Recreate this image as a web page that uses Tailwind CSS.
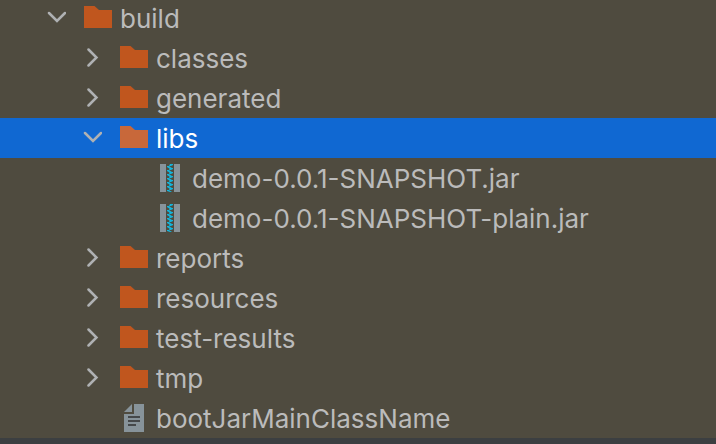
<!DOCTYPE html>
<html lang="en">
<head>
  <meta charset="UTF-8" />
  <meta name="viewport" content="width=device-width, initial-scale=1.0"/>
  <title>Project</title>
  <script src="https://cdn.jsdelivr.net/npm/@tailwindcss/browser@4"></script>
</head>
<body class="min-h-screen flex flex-col overflow-hidden bg-[#3c3f41] font-['Inter',sans-serif] text-[26px] leading-10 text-[#bbbbbb]">

  <svg class="hidden">
    <symbol id="down" viewBox="0 0 20 20">
      <path d="M3 5l8 8 8-8" fill="none" stroke="#afb1b3" stroke-width="2.5" stroke-linecap="round"/>
    </symbol>
    <symbol id="right" viewBox="0 0 20 20">
      <path d="M6.500 1.500l8 8-8 8" fill="none" stroke="#afb1b3" stroke-width="2.500" stroke-linecap="round"/>
    </symbol>
    <symbol id="folder" viewBox="0 0 32 32">
      <path d="M2 4h10.500l4.500 4h13v18H2z" fill="currentColor"/>
    </symbol>
    <symbol id="jar" viewBox="0 0 32 32">
      <path d="M6 2h6v28H6zM20 2h6v28h-6z" fill="#87939a"/>
      <path d="M16 2h3v1l-2 1h-2zM16 6h3v1l-2 1h-2zM16 10h3v1l-2 1h-2zM16 14h3v1l-2 1h-2zM16 18h3v1l-2 1h-2zM16 22h3v1l-2 1h-2zM16 26h3v1l-2 1h-2z" fill="#12b5dc"/>
      <path d="M13 4h2l3 2v1h-2l-3-2zM13 8h2l3 2v1h-2l-3-2zM13 12h2l3 2v1h-2l-3-2zM13 16h2l3 2v1h-2l-3-2zM13 20h2l3 2v1h-2l-3-2zM13 24h2l3 2v1h-2l-3-2zM13 28h2l3 2h-2l-3-1z" fill="#12b5dc"/>
    </symbol>
    <symbol id="file" viewBox="0 0 32 32">
      <path d="M16 2h10v28H6V12h10zM14 2v8H6z" fill="#87939a"/>
      <path d="M10 14h12v2H10zM10 18h12v2H10zM10 22h8v2h-8z" fill="#45484a"/>
    </symbol>
  </svg>

  <ul class="-mt-0.5 bg-[#4f4b3f] whitespace-nowrap">
    <li class="flex items-center h-10 pl-[46px]">
      <svg class="size-5 mr-4 shrink-0"><use href="#down"/></svg>
      <svg class="size-8 mr-1.5 shrink-0 text-[#c0561e]"><use href="#folder"/></svg>
      <span class="pt-0.5">build</span>
    </li>
    <li class="flex items-center h-10 pl-[82px]">
      <svg class="size-5 mr-4 shrink-0"><use href="#right"/></svg>
      <svg class="size-8 mr-1.5 shrink-0 text-[#c0561e]"><use href="#folder"/></svg>
      <span class="pt-0.5">classes</span>
    </li>
    <li class="flex items-center h-10 pl-[82px]">
      <svg class="size-5 mr-4 shrink-0"><use href="#right"/></svg>
      <svg class="size-8 mr-1.5 shrink-0 text-[#c0561e]"><use href="#folder"/></svg>
      <span class="pt-0.5">generated</span>
    </li>
    <!-- selected -->
    <li class="flex items-center h-10 pl-[82px] bg-[#1068d2] text-white">
      <svg class="size-5 mr-4 shrink-0"><use href="#down"/></svg>
      <svg class="size-8 mr-1.5 shrink-0 text-[#c8683a]"><use href="#folder"/></svg>
      <span class="pt-0.5">libs</span>
    </li>
    <li class="flex items-center h-10 pl-[154px]">
      <svg class="size-8 mr-1.5 shrink-0"><use href="#jar"/></svg>
      <span class="pt-0.5">demo-0.0.1-SNAPSHOT.jar</span>
    </li>
    <li class="flex items-center h-10 pl-[154px]">
      <svg class="size-8 mr-1.5 shrink-0"><use href="#jar"/></svg>
      <span class="pt-0.5">demo-0.0.1-SNAPSHOT-plain.jar</span>
    </li>
    <li class="flex items-center h-10 pl-[82px]">
      <svg class="size-5 mr-4 shrink-0"><use href="#right"/></svg>
      <svg class="size-8 mr-1.5 shrink-0 text-[#c0561e]"><use href="#folder"/></svg>
      <span class="pt-0.5">reports</span>
    </li>
    <li class="flex items-center h-10 pl-[82px]">
      <svg class="size-5 mr-4 shrink-0"><use href="#right"/></svg>
      <svg class="size-8 mr-1.5 shrink-0 text-[#c0561e]"><use href="#folder"/></svg>
      <span class="pt-0.5">resources</span>
    </li>
    <li class="flex items-center h-10 pl-[82px]">
      <svg class="size-5 mr-4 shrink-0"><use href="#right"/></svg>
      <svg class="size-8 mr-1.5 shrink-0 text-[#c0561e]"><use href="#folder"/></svg>
      <span class="pt-0.5">test-results</span>
    </li>
    <li class="flex items-center h-10 pl-[82px]">
      <svg class="size-5 mr-4 shrink-0"><use href="#right"/></svg>
      <svg class="size-8 mr-1.5 shrink-0 text-[#c0561e]"><use href="#folder"/></svg>
      <span class="pt-0.5">tmp</span>
    </li>
    <li class="flex items-center h-10 pl-[118px]">
      <svg class="size-8 mr-1.5 shrink-0"><use href="#file"/></svg>
      <span class="pt-0.5">bootJarMainClassName</span>
    </li>
  </ul>

</body>
</html>
